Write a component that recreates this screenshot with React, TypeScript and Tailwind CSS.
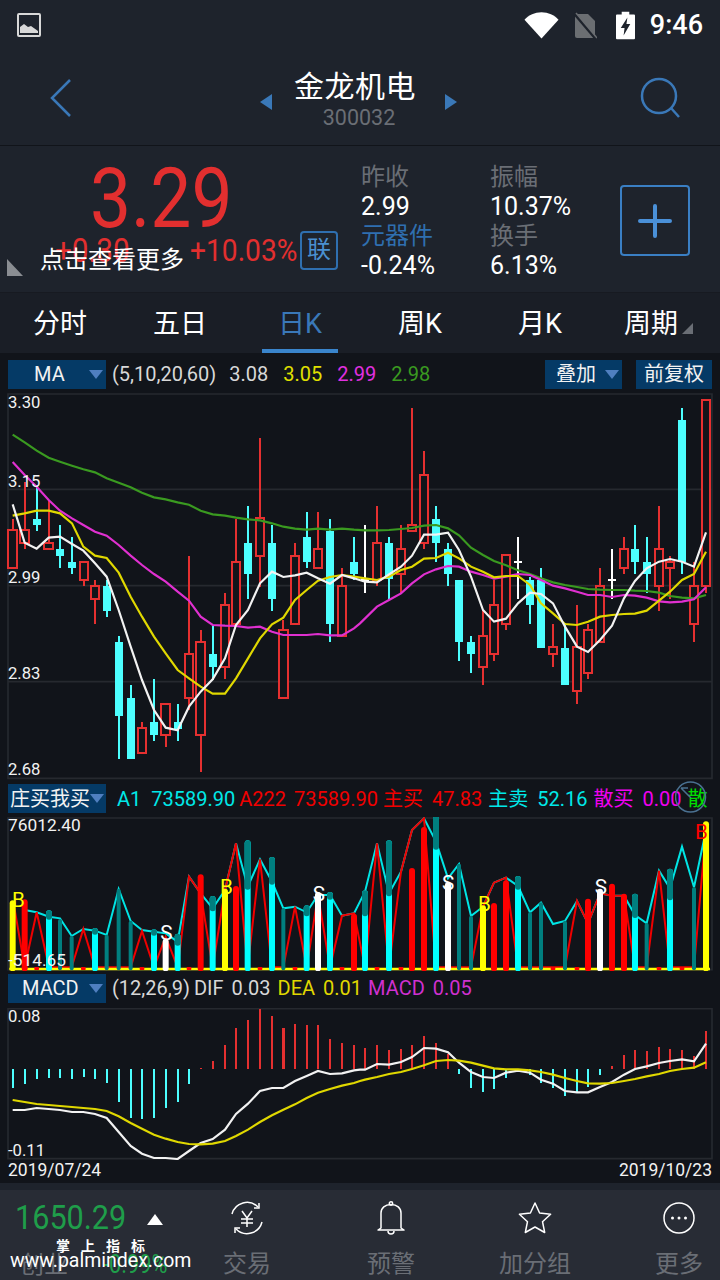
const font = "font-['Roboto','Noto_Sans_CJK_SC',sans-serif]"

type P = [number, number]
type Candle = [number, 'r' | 'c' | 'w', number, number, number, number]

// chart data is kept in 3x picture units, right half x values are offset by 1080
const right = (a: P[]): P[] => a.map(([x, y]) => [x + 1080, y])
const pts = (a: P[]) => a.map((p) => p.join(',')).join(' ')

const candles: Candle[] = [
    [38, 'r', 387, 421, 535, 535], [74, 'r', 277, 421, 459, 477], [110, 'c', 285, 387, 405, 423], [146, 'r', 331, 459, 477, 477],
    [180, 'c', 405, 477, 498, 533], [216, 'c', 441, 516, 534, 552], [252, 'r', 515, 515, 570, 587], [285, 'r', 570, 587, 628, 702],
    [320, 'c', 570, 587, 662, 681], [356, 'c', 738, 756, 977, 1107], [392, 'c', 885, 924, 1107, 1107], [426, 'r', 997, 1013, 1090, 1090],
    [462, 'c', 867, 996, 1034, 1052], [497, 'r', 941, 941, 1036, 1070], [533, 'c', 942, 996, 1016, 1052], [567, 'r', 498, 791, 925, 960],
    [602, 'r', 720, 755, 1035, 1145], [638, 'c', 705, 792, 830, 870], [675, 'r', 610, 644, 830, 866], [708, 'r', 387, 515, 703, 703],
    [744, 'c', 348, 460, 551, 627], [780, 'r', 144, 385, 498, 590], [816, 'c', 405, 460, 627, 662], [850, 'r', 690, 719, 925, 925],
    [885, 'r', 460, 497, 703, 703], [920, 'c', 366, 441, 516, 534], [954, 'r', 366, 476, 535, 535], [990, 'c', 387, 423, 701, 755],
    [1026, 'r', 535, 587, 738, 738], [1062, 'c', 441, 516, 552, 570], [1095, 'w', 405, 570, 574, 608], [1131, 'r', 349, 459, 570, 587],
    [1167, 'c', 441, 460, 568, 627], [1203, 'r', 405, 476, 551, 610], [1236, 'r', 55, 404, 423, 423], [1272, 'r', 183, 254, 460, 476],
    [1308, 'c', 348, 387, 459, 516], [1344, 'c', 460, 477, 552, 588], [1377, 'c', 570, 570, 755, 812], [1413, 'c', 738, 756, 792, 848],
    [1449, 'r', 660, 737, 832, 885], [1482, 'r', 570, 644, 793, 812], [1518, 'r', 496, 496, 703, 720], [1554, 'w', 441, 516, 518, 627],
    [1590, 'c', 562, 570, 644, 702], [1623, 'c', 534, 570, 773, 773], [1659, 'r', 702, 772, 793, 830], [1695, 'c', 700, 774, 885, 885],
    [1731, 'r', 645, 772, 904, 941], [1764, 'r', 702, 719, 850, 866], [1800, 'r', 534, 587, 756, 756], [1836, 'w', 477, 570, 572, 627],
    [1872, 'r', 441, 476, 535, 552], [1905, 'c', 405, 477, 516, 552], [1940, 'c', 441, 516, 552, 608], [1977, 'r', 348, 476, 589, 662],
    [2010, 'r', 498, 515, 535, 627], [2046, 'c', 55, 90, 515, 552], [2082, 'r', 515, 587, 703, 755], [2118, 'r', 30, 30, 588, 608],
]

const maWhite: P[] = [
    [38, 343], [74, 458], [110, 476], [146, 443], [180, 440], [216, 462], [250, 482], [285, 520], [320, 560], [356, 660], [392, 770], [426, 870], [462, 960], [497, 1013], [533, 1021], [567, 950], [602, 905], [638, 868], [675, 805], [708, 705], [744, 660], [780, 580], [816, 545], [850, 561], [885, 556], [920, 548], [954, 565], [990, 581], [1026, 555], [1062, 565],
    ...right([[15, 575], [51, 577], [87, 553], [123, 530], [156, 497], [192, 434], [228, 434], [264, 428], [297, 480], [333, 560], [369, 660], [402, 695], [438, 686], [474, 640], [510, 608], [543, 612], [579, 640], [615, 710], [651, 770], [684, 786], [720, 750], [756, 707], [792, 625], [825, 573], [860, 535], [897, 515], [930, 507], [966, 515], [1002, 530], [1038, 427]]),
]
const maYellow: P[] = [
    [38, 377], [74, 370], [110, 362], [146, 362], [180, 370], [216, 400], [250, 470], [285, 497], [320, 504], [356, 548], [392, 620], [426, 680], [462, 740], [497, 790], [533, 840], [567, 865], [602, 890], [638, 911], [675, 911], [708, 865], [744, 805], [780, 745], [816, 703], [850, 683], [885, 630], [920, 600], [954, 572], [990, 561], [1026, 555], [1062, 560],
    ...right([[15, 565], [51, 570], [87, 560], [123, 540], [156, 530], [192, 506], [228, 504], [264, 488], [297, 505], [333, 530], [369, 545], [402, 562], [438, 558], [474, 558], [510, 585], [543, 640], [579, 670], [615, 702], [651, 705], [684, 695], [720, 680], [756, 675], [792, 672], [825, 671], [860, 662], [897, 632], [930, 605], [966, 570], [1002, 552], [1038, 485]]),
]
const maPink: P[] = [
    [38, 216], [74, 255], [110, 290], [146, 330], [180, 362], [216, 385], [250, 405], [285, 425], [320, 437], [356, 465], [392, 497], [426, 525], [462, 552], [497, 575], [533, 605], [567, 632], [602, 680], [638, 705], [675, 707], [708, 708], [744, 713], [780, 710], [816, 725], [850, 735], [885, 735], [920, 735], [954, 732], [990, 736], [1026, 736], [1062, 715],
    ...right([[0, 700], [51, 650], [87, 630], [123, 610], [156, 580], [192, 553], [228, 538], [264, 528], [297, 530], [333, 545], [369, 555], [402, 566], [438, 560], [474, 552], [510, 555], [543, 570], [579, 587], [615, 595], [651, 605], [684, 615], [720, 615], [756, 621], [792, 615], [825, 617], [860, 623], [897, 634], [930, 637], [966, 635], [1002, 628], [1038, 592]]),
]
const maGreen: P[] = [
    [38, 134], [74, 157], [110, 182], [146, 203], [180, 215], [216, 227], [250, 238], [285, 247], [320, 265], [356, 278], [392, 292], [426, 308], [462, 322], [497, 328], [533, 337], [567, 344], [602, 362], [638, 373], [675, 377], [708, 383], [744, 388], [780, 391], [816, 400], [850, 410], [885, 416], [920, 419], [954, 416], [990, 419], [1026, 416], [1062, 419],
    ...right([[15, 421], [51, 421], [87, 420], [123, 417], [156, 414], [192, 407], [228, 405], [264, 415], [297, 436], [333, 473], [369, 495], [402, 513], [438, 526], [474, 541], [510, 552], [543, 565], [579, 577], [615, 585], [651, 591], [684, 597], [720, 599], [756, 600], [792, 600], [825, 602], [860, 603], [897, 608], [930, 618], [966, 623], [1002, 625], [1038, 615]]),
]

// x, kind, top, and for cyan bars where the dark cap ends
type Bar = [number, 'y' | 'r' | 'c' | 't' | 'w' | 'd', number, number?]
const bars: Bar[] = [
    [38, 'y', 365], [74, 'r', 362], [110, 'd', 562], [147, 'c', 395, 410], [180, 't', 418], [215, 't', 468], [250, 'd', 562], [285, 'c', 448, 455], [320, 't', 465], [356, 't', 327], [392, 't', 423], [426, 'd', 562], [462, 'c', 452, 458], [497, 'w', 480], [533, 'c', 465, 488], [567, 'd', 562], [602, 'r', 287], [638, 'c', 352, 385], [675, 'y', 330], [708, 'r', 322], [743, 'c', 185, 320], [780, 'd', 562], [816, 'c', 235, 305], [850, 't', 385], [885, 'd', 562], [920, 'c', 380, 400], [954, 'w', 340], [990, 'c', 340, 350], [1026, 'd', 562], [1062, 'r', 405],
    [1095, 'c', 335, 400], [1131, 'd', 562], [1167, 'c', 185, 340], [1203, 'd', 562], [1236, 'r', 268], [1272, 'r', 145], [1308, 'c', 110, 200], [1344, 'w', 310], [1377, 't', 252], [1413, 't', 408], [1449, 'y', 380], [1482, 'r', 373], [1518, 'r', 305], [1554, 'c', 292, 320], [1590, 't', 397], [1623, 't', 368], [1659, 'd', 562], [1695, 't', 423], [1731, 'd', 562], [1764, 'r', 360], [1800, 'w', 330], [1836, 'r', 315], [1872, 'r', 345], [1905, 'c', 345, 405], [1940, 't', 430], [1977, 'd', 562], [2010, 'c', 270, 352], [2046, 'd', 562], [2082, 't', 322], [2118, 'y', 128],
]
const barColor = { y: '#ffff00', r: '#ff0000', c: '#00ffff', t: '#007f7f', w: '#ffffff', d: '#ff0000' }

const flowCyan: P[] = [
    [74, 390], [110, 397], [147, 410], [180, 415], [215, 468], [250, 447], [285, 452], [320, 465], [356, 327], [392, 423], [426, 450], [462, 455], [497, 460], [533, 485], [567, 290], [602, 340], [638, 385], [675, 330], [708, 190], [743, 320], [780, 238], [816, 305], [850, 385], [885, 380], [920, 397], [954, 345], [990, 345], [1026, 407], [1062, 400],
    ...right([[15, 335], [51, 190], [87, 340], [123, 275], [156, 150], [192, 115], [228, 185], [264, 295], [297, 252], [333, 408], [369, 380], [402, 308], [438, 293], [474, 318], [510, 397], [543, 368], [579, 432], [615, 423], [651, 363], [684, 430], [720, 340], [756, 347], [792, 347], [825, 405], [860, 430], [897, 272], [930, 325], [966, 200], [1002, 322], [1038, 150]]),
]
const flowRed: P[] = [
    [40, 365], [74, 562], [110, 397], [147, 562], [215, 562], [250, 447], [285, 562], [392, 562], [426, 453], [462, 562], [497, 470], [533, 562], [567, 290], [602, 340], [638, 562], [675, 330], [708, 190], [743, 562], [780, 238], [816, 562], [850, 562], [885, 380], [920, 562], [954, 345], [990, 562], [1026, 407], [1062, 400],
    ...right([[15, 562], [51, 190], [87, 562], [123, 275], [156, 150], [192, 115], [228, 562], [333, 562], [369, 380], [402, 308], [438, 293], [474, 562], [615, 562], [651, 363], [684, 430], [720, 340], [756, 347], [792, 347], [825, 562], [860, 562], [897, 272], [930, 562], [1002, 562], [1038, 150]]),
]

const macdBars: [number, number][] = [
    [38, 338], [74, 326], [110, 311], [146, 308], [180, 308], [216, 311], [252, 305], [285, 311], [320, 323], [356, 380], [392, 428], [426, 431], [462, 428], [497, 398], [533, 380], [567, 326],
    [602, 279], [638, 258], [675, 210], [708, 159], [744, 135], [780, 100], [816, 123], [850, 159], [885, 147], [920, 150], [954, 150], [990, 192], [1026, 204], [1062, 210],
    [1095, 219], [1131, 210], [1167, 225], [1203, 222], [1236, 210], [1272, 183], [1308, 204], [1344, 237],
    [1377, 296], [1413, 338], [1449, 350], [1482, 341], [1518, 308], [1554, 285], [1590, 299], [1623, 323], [1659, 338], [1695, 361], [1731, 353], [1764, 335], [1800, 299],
    [1836, 273], [1872, 240], [1905, 225], [1940, 228], [1977, 216], [2010, 222], [2046, 225], [2082, 243], [2118, 168],
]
const difLine: P[] = [
    [38, 404], [74, 404], [110, 398], [146, 401], [180, 404], [216, 410], [250, 410], [285, 416], [320, 428], [356, 470], [392, 512], [426, 535], [462, 548], [497, 548], [533, 551], [567, 527], [602, 503], [638, 491], [675, 463], [708, 416], [744, 385], [780, 347], [816, 338], [850, 338], [885, 317], [920, 302], [954, 287], [990, 296], [1026, 294], [1062, 285], [1080, 283],
    ...right([[15, 283], [51, 266], [87, 268], [123, 260], [156, 245], [192, 218], [228, 220], [264, 231], [297, 262], [333, 290], [369, 305], [402, 308], [438, 292], [474, 286], [510, 292], [543, 313], [579, 325], [615, 347], [651, 351], [684, 351], [720, 335], [756, 320], [792, 298], [825, 281], [860, 273], [897, 263], [930, 257], [966, 252], [1002, 258], [1038, 205]]),
]
const deaLine: P[] = [
    [38, 374], [74, 380], [110, 386], [146, 389], [180, 392], [216, 395], [250, 398], [285, 401], [320, 407], [356, 423], [392, 443], [426, 460], [462, 478], [497, 490], [533, 500], [567, 506], [602, 507], [638, 505], [675, 497], [708, 482], [744, 463], [780, 440], [816, 420], [850, 403], [885, 387], [920, 368], [954, 352], [990, 341], [1026, 331], [1062, 323], [1080, 317],
    ...right([[15, 313], [51, 305], [87, 296], [123, 290], [156, 281], [192, 270], [228, 257], [264, 254], [297, 256], [333, 262], [369, 271], [402, 279], [438, 282], [474, 282], [510, 285], [543, 290], [579, 298], [615, 308], [651, 317], [684, 324], [720, 325], [756, 323], [792, 317], [825, 311], [860, 303], [897, 296], [930, 287], [966, 281], [1002, 277], [1038, 261]]),
]

function Caret() {
    return <span className="w-0 h-0 border-x-[7px] border-x-transparent border-t-[9px] border-t-[#4f7fc0]" />
}

function BlueBox({ label, left }: { label: string; left: string }) {
    return (
        <div className="w-[98px] h-[29px] bg-[#053a66] flex items-center shrink-0">
            <span className={`text-[#f2f2f2] text-[20px] leading-none whitespace-nowrap ${left}`}>{label}</span>
            <span className="ml-auto mr-[3px] flex"><Caret /></span>
        </div>
    )
}

function StatusBar() {
    return (
        <div className="h-[50px] flex items-center pl-[17px] pr-[17px]">
            <svg width="24" height="24" viewBox="0 0 24 24" fill="none">
                <rect x="1" y="1" width="22" height="22" rx="1" stroke="#d8d8d8" strokeWidth="2" />
                <path d="M3 20v-6l4-3 4 3 3-1 7 5v2z" fill="#d8d8d8" />
            </svg>
            <svg className="ml-auto" width="35" height="28" viewBox="0 0 36 28">
                <path d="M18 28 0.5 8.500C5 4 11 1 18 1s13 3 17.500 7.500z" fill="#fff" />
            </svg>
            <svg className="ml-[14px]" width="24" height="28" viewBox="0 0 24 28" fill="none">
                <path d="M2 3h13l7 7v15a2 2 0 0 1-2 2H4a2 2 0 0 1-2-2z" fill="#6b6e72" />
                <path d="M1 2l22 26" stroke="#1e232c" strokeWidth="3" />
                <path d="M3 2l21 25" stroke="#6b6e72" strokeWidth="1.500" />
            </svg>
            <svg className="ml-[19px]" width="19" height="29" viewBox="0 0 20 29">
                <path d="M6 0h8v3h5a1 1 0 0 1 1 1v24a1 1 0 0 1-1 1H1a1 1 0 0 1-1-1V4a1 1 0 0 1 1-1h5z" fill="#fff" />
                <path d="M12 6 5 17h4l-1 8 7-12h-4z" fill="#1e232c" />
            </svg>
            <span className="ml-[15px] text-white text-[27px] font-medium leading-none">9:46</span>
        </div>
    )
}

function TitleBar() {
    return (
        <div className="relative h-[96px] border-b border-b-[#11141a] flex items-start">
            <svg className="ml-[49px] mt-[28px]" width="23" height="40" viewBox="0 0 23 40" fill="none">
                <path d="M21 2 3 20l18 18" stroke="#3a78b8" strokeWidth="2.500" />
            </svg>
            <div className="ml-[188px] mt-[44px] w-0 h-0 border-y-[8px] border-y-transparent border-r-[12px] border-r-[#3a78b8]" />
            <div className="ml-[22px] w-[122px] flex flex-col items-center">
                <span className="text-white text-[30px] leading-none mt-[22px] tracking-[0.5px] whitespace-nowrap">金龙机电</span>
                <span className="text-[#6a6e75] text-[21.500px] leading-none mt-[5px] ml-[8px]">300032</span>
            </div>
            <div className="ml-[29px] mt-[44px] w-0 h-0 border-y-[8px] border-y-transparent border-l-[12px] border-l-[#3a78b8]" />
            <svg className="ml-[183px] mt-[27px]" width="42" height="42" viewBox="0 0 42 42" fill="none">
                <circle cx="19" cy="19" r="17" stroke="#3a78b8" strokeWidth="2.500" />
                <path d="M31 31l8 9" stroke="#3a78b8" strokeWidth="2.500" />
            </svg>
        </div>
    )
}

function Stat({ label, value, blue }: { label: string; value: string; blue?: boolean }) {
    return (
        <div className="flex flex-col">
            <span className={`text-[24px] leading-[30px] whitespace-nowrap ${blue ? 'text-[#2f6fb0]' : 'text-[#6a6e75]'}`}>{label}</span>
            <span className="text-white text-[25px] leading-[29px] whitespace-nowrap">{value}</span>
        </div>
    )
}

function Quote() {
    return (
        <div className="relative h-[146px] flex items-start">
            <div className="relative w-[361px] shrink-0 h-full">
                <div className="pl-[90px] pt-[22px] text-[#e22f2f] text-[84px] leading-[62px]">
                    <span className="inline-block scale-x-[0.87] origin-left">3.29</span>
                </div>
                <div className="flex items-center h-[40px] pl-[55px]">
                    <span className="w-[135px] shrink-0 text-[#e22f2f] text-[33px] leading-none">
                        <span className="inline-block scale-x-[0.9] origin-left">+0.30</span>
                    </span>
                    <span className="w-[110px] shrink-0 text-[#e22f2f] text-[32px] leading-none">
                        <span className="inline-block scale-x-[0.88] origin-left whitespace-nowrap">+10.03%</span>
                    </span>
                    <span className="w-[38px] h-[39px] shrink-0 border-2 border-[#2f6fb0] rounded-[4px] flex items-center justify-center text-[#4a90d0] text-[24px] leading-none">联</span>
                </div>
                <span className="absolute left-[40px] top-[98px] text-white text-[24px] leading-[32px] whitespace-nowrap">点击查看更多</span>
                <span className="absolute left-[7px] top-[113px] w-0 h-0 border-b-[17px] border-b-[#8a8d92] border-r-[16px] border-r-transparent" />
            </div>
            <div className="w-[129px] shrink-0 pt-[16px] flex flex-col">
                <Stat label="昨收" value="2.99" />
                <Stat label="元器件" value="-0.24%" blue />
            </div>
            <div className="w-[130px] shrink-0 pt-[16px] flex flex-col">
                <Stat label="振幅" value="10.37%" />
                <Stat label="换手" value="6.13%" />
            </div>
            <div className="mt-[39px] w-[70px] h-[71px] border-2 border-[#3a7fc4] rounded-[4px] flex items-center justify-center">
                <svg width="34" height="34" viewBox="0 0 34 34">
                    <path d="M17 2v30M2 17h30" stroke="#4a90d8" strokeWidth="4" strokeLinecap="round" />
                </svg>
            </div>
        </div>
    )
}

function Tabs() {
    const tabs = ['分时', '五日', '日K', '周K', '月K', '周期']
    return (
        <div className="h-[61px] bg-[#1a1e26] grid grid-cols-6 border-t border-t-[#171a21]">
            {tabs.map((t, i) => (
                <div key={t} className="relative flex items-center justify-center pt-[2px]">
                    <span className={`text-[27px] leading-none ${i === 2 ? 'text-[#3a78b8]' : 'text-white'} ${i === 5 ? 'mr-[18px]' : ''}`}>{t}</span>
                    {i === 5 && <span className="absolute left-[82px] top-[30px] w-0 h-0 border-b-[11px] border-b-[#6a6e75] border-l-[11px] border-l-transparent" />}
                    {i === 2 && <span className="absolute left-[22px] bottom-0 w-[76px] h-[4px] bg-[#3a85cc]" />}
                </div>
            ))}
        </div>
    )
}

function Frame({ top, bottom }: { top: number; bottom: number }) {
    return <path d={`M24 ${bottom}V${top}H2136V${bottom}Z`} fill="none" stroke="#26292f" strokeWidth="5" />
}

function PriceChart() {
    const col = { r: '#e53030', c: '#4dffff', w: '#ffffff' }
    return (
        <svg className="block" width="720" height="390" viewBox="0 0 2160 1170">
            <Frame top={12} bottom={1165} />
            {[298, 587, 875].map((y) => (
                <path key={y} d={`M24 ${y}H2136`} stroke="#26292f" strokeWidth="5" />
            ))}
            {candles.map(([x, k, hi, top, bot, lo]) => (
                <g key={x} shapeRendering="crispEdges">
                    <path d={`M${x} ${hi}V${lo}`} stroke={col[k]} strokeWidth="6" />
                    {k === 'r' && <rect x={x - 13} y={top} width="26" height={bot - top} fill="#11141a" stroke={col.r} strokeWidth="6" />}
                    {k === 'c' && <rect x={x - 12} y={top} width="24" height={bot - top} fill={col.c} />}
                    {k === 'w' && <path d={`M${x - 12} ${top}H${x + 12}`} stroke={col.w} strokeWidth="6" />}
                </g>
            ))}
            <polyline points={pts(maGreen)} fill="none" stroke="#3a9a20" strokeWidth="6.500" />
            <polyline points={pts(maPink)} fill="none" stroke="#e030d0" strokeWidth="6.500" />
            <polyline points={pts(maYellow)} fill="none" stroke="#e0d800" strokeWidth="6.500" />
            <polyline points={pts(maWhite)} fill="none" stroke="#f2f2f2" strokeWidth="6.500" />
            {[['3.30', 54], ['3.15', 291], ['2.99', 579], ['2.83', 867], ['2.68', 1155]].map(([t, y]) => (
                <text key={t} x="24" y={y} fill="#f2f2f2" fontSize="50">{t}</text>
            ))}
        </svg>
    )
}

function FlowChart() {
    return (
        <svg className="block" width="720" height="154" viewBox="0 111 2160 462">
            <Frame top={114} bottom={569} />
            <polyline points={pts(flowCyan)} fill="none" stroke="#00e5e5" strokeWidth="6" />
            <polyline points={pts(flowRed)} fill="none" stroke="#f00000" strokeWidth="6" />
            <path d="M28 567H2130" stroke="#ffff00" strokeWidth="7" />
            {bars.map(([x, k, top, cap]) =>
                k === 'd' ? (
                    <rect key={x} x={x - 7} y="561" width="14" height="9" fill="#ff0000" rx="2" />
                ) : (
                    <g key={x}>
                        <path d={`M${x} ${top + 5}V565`} stroke={barColor[k]} strokeWidth={k === 't' ? 12 : 18} strokeLinecap="round" />
                        {cap && <path d={`M${x} ${top + 5}V${cap}`} stroke="#007f7f" strokeWidth="18" strokeLinecap="round" />}
                    </g>
                ),
            )}
            <text x="24" y="153" fill="#f2f2f2" fontSize="52">76012.40</text>
            <text x="24" y="558" fill="#f2f2f2" fontSize="52">-514.65</text>
            {[['B', 36, 380, '#ffff00'], ['S', 481, 480, '#ffffff'], ['B', 660, 342, '#ffff00'], ['S', 938, 362, '#ffffff'], ['S', 1326, 330, '#ffffff'], ['B', 1434, 392, '#ffff00'], ['S', 1784, 342, '#ffffff'], ['B', 2085, 176, '#ff0000']].map(([t, x, y, c]) => (
                <text key={String(x)} x={x} y={y} fill={String(c)} fontSize="62">{t}</text>
            ))}
        </svg>
    )
}

function MacdChart() {
    return (
        <svg className="block" width="720" height="152" viewBox="0 98 2160 456">
            <Frame top={100} bottom={550} />
            {macdBars.map(([x, end]) => (
                <path key={x} d={`M${x} 282V${end}`} stroke={end > 282 ? '#4dffff' : '#e53030'} strokeWidth="7" shapeRendering="crispEdges" />
            ))}
            <polyline points={pts(difLine)} fill="none" stroke="#f2f2f2" strokeWidth="6.500" />
            <polyline points={pts(deaLine)} fill="none" stroke="#e0d800" strokeWidth="6.500" />
            <text x="24" y="141" fill="#f2f2f2" fontSize="50">0.08</text>
            <text x="24" y="541" fill="#f2f2f2" fontSize="50">-0.11</text>
        </svg>
    )
}

function NavItem({ label, icon }: { label: string; icon: React.ReactNode }) {
    return (
        <div className="w-[144px] shrink-0 flex flex-col items-center">
            <div className="h-[36px] mt-[10px] flex items-center">{icon}</div>
            <span className="mt-[13px] text-[#6a6e75] text-[24px] leading-[30px] whitespace-nowrap">{label}</span>
        </div>
    )
}

function BottomBar() {
    return (
        <div className="relative h-[90px] bg-[#282c35] flex overflow-hidden">
            <div className="relative w-[175px] shrink-0">
                <span className="absolute left-[15px] top-[7px] text-[#1f9e4a] text-[34px] leading-[40px] inline-block scale-x-[0.9] origin-left">1650.29</span>
                <span className="absolute left-[147px] top-[24px] w-0 h-0 border-x-[8px] border-x-transparent border-b-[11px] border-b-white" />
                <span className="absolute left-[20px] top-[60px] text-[#6a6e75] text-[24px] leading-[30px]">创业</span>
                <span className="absolute left-[103px] top-[60px] text-[#1f9e4a] text-[25px] leading-[30px] inline-block scale-x-[0.87] origin-left">-0.99%</span>
            </div>
            <NavItem
                label="交易"
                icon={
                    <svg width="34" height="34" viewBox="0 0 34 34" fill="none" stroke="#fff" strokeWidth="1.500">
                        <path d="M2 13A15.500 15.500 0 0 1 28 6M32 21A15.500 15.500 0 0 1 6 28" />
                        <path d="M24 7h5V2M10 27H5v5" />
                        <path d="M12 10l5 7 5-7M11 18h12M11 22h12M17 17v9" />
                    </svg>
                }
            />
            <NavItem
                label="预警"
                icon={
                    <svg width="30" height="34" viewBox="0 0 30 34" fill="none" stroke="#fff" strokeWidth="1.500">
                        <path d="M5 27V12c0-5 4-8.500 10-8.500s10 3.500 10 8.500v15l3 2H2z" strokeLinejoin="round" />
                        <circle cx="15" cy="2.500" r="1.700" />
                        <path d="M12 30a3 3 0 0 0 6 0" />
                    </svg>
                }
            />
            <NavItem
                label="加分组"
                icon={
                    <svg width="34" height="34" viewBox="0 0 34 34" fill="none" stroke="#fff" strokeWidth="1.500">
                        <path d="M17 2l4.600 10 11 1.300-8.100 7.400 2.200 10.800L17 26l-9.700 5.500 2.200-10.800L1.400 13.300l11-1.300z" strokeLinejoin="round" />
                    </svg>
                }
            />
            <NavItem
                label="更多"
                icon={
                    <svg width="32" height="32" viewBox="0 0 32 32" fill="none">
                        <circle cx="16" cy="16" r="15" stroke="#fff" strokeWidth="1.500" />
                        <circle cx="9.500" cy="16" r="1.500" fill="#fff" />
                        <circle cx="16" cy="16" r="1.500" fill="#fff" />
                        <circle cx="22.500" cy="16" r="1.500" fill="#fff" />
                    </svg>
                }
            />
            <span className="absolute left-[56px] top-[49px] text-white text-[14px] font-bold leading-none tracking-[11px] whitespace-nowrap">掌上指标</span>
            <span className="absolute left-[10px] top-[59px] text-white text-[19.500px] leading-[24px] whitespace-nowrap">www.palmindex.com</span>
        </div>
    )
}

export default function App() {
    return (
        <div className={`${font} w-[720px] h-[1280px] bg-[#1e232c] overflow-hidden relative`}>
            <StatusBar />
            <TitleBar />
            <Quote />
            <Tabs />
            <div className="bg-[#11141a]">
                <div className="h-[37px] flex items-center pl-[8px] pr-[8px] pt-[5px] text-[20px]">
                    <BlueBox label="MA" left="ml-[26px]" />
                    <span className="ml-[6px] text-[#d8d8d8]">(5,10,20,60)</span>
                    <span className="ml-[13px] text-[#d8d8d8]">3.08</span>
                    <span className="ml-[15px] text-[#e0e000]">3.05</span>
                    <span className="ml-[15px] text-[#e030e0]">2.99</span>
                    <span className="ml-[15px] text-[#3a9a20]">2.98</span>
                    <div className="ml-auto h-[29px] w-[77px] bg-[#053a66] flex items-center">
                        <span className="ml-[11px] text-[#f2f2f2] leading-none">叠加</span>
                        <span className="ml-auto mr-[3px] flex"><Caret /></span>
                    </div>
                    <div className="ml-[14px] h-[29px] w-[76px] bg-[#053a66] flex items-center justify-center text-[#f2f2f2] leading-none">前复权</div>
                </div>
                <PriceChart />
                <div className="relative h-[37px] flex items-center pl-[8px] text-[20px] whitespace-nowrap">
                    <BlueBox label="庄买我买" left="ml-[2px]" />
                    <span className="ml-[11px] text-[#00e8e8]">A1</span>
                    <span className="ml-[10px] text-[#00e8e8]">73589.90</span>
                    <span className="ml-[4px] text-[#f00000]">A222</span>
                    <span className="ml-[8px] text-[#f00000]">73589.90</span>
                    <span className="ml-[5px] text-[#f00000]">主买</span>
                    <span className="ml-[9px] text-[#f00000]">47.83</span>
                    <span className="ml-[6px] text-[#00e8e8]">主卖</span>
                    <span className="ml-[9px] text-[#00e8e8]">52.16</span>
                    <span className="ml-[6px] text-[#f000f0]">散买</span>
                    <span className="ml-[9px] text-[#f000f0]">0.00</span>
                    <span className="ml-[6px] text-[#00e000]">散</span>
                    <svg className="absolute left-[675px] top-[0px]" width="32" height="34" viewBox="0 0 32 34" fill="none">
                        <circle cx="15.500" cy="17" r="15" stroke="#4a7090" strokeWidth="1.500" />
                        <path d="M6 8h7M6 8l10 10" stroke="#4a7090" strokeWidth="1.500" />
                    </svg>
                </div>
                <FlowChart />
                <div className="h-[37px] flex items-center pl-[8px] text-[20px] whitespace-nowrap pb-[3px]">
                    <BlueBox label="MACD" left="ml-[14px]" />
                    <span className="ml-[6px] text-[#d8d8d8]">(12,26,9)</span>
                    <span className="ml-[4px] text-[#d8d8d8]">DIF</span>
                    <span className="ml-[8px] text-[#d8d8d8]">0.03</span>
                    <span className="ml-[7px] text-[#e0d800]">DEA</span>
                    <span className="ml-[8px] text-[#e0d800]">0.01</span>
                    <span className="ml-[6px] text-[#d030d0]">MACD</span>
                    <span className="ml-[8px] text-[#d030d0]">0.05</span>
                </div>
                <MacdChart />
                <div className="h-[23px] flex justify-between px-[8px] text-[#f2f2f2] text-[17.500px] leading-[20px]">
                    <span>2019/07/24</span>
                    <span>2019/10/23</span>
                </div>
            </div>
            <div className="h-[7px]" />
            <BottomBar />
        </div>
    )
}
